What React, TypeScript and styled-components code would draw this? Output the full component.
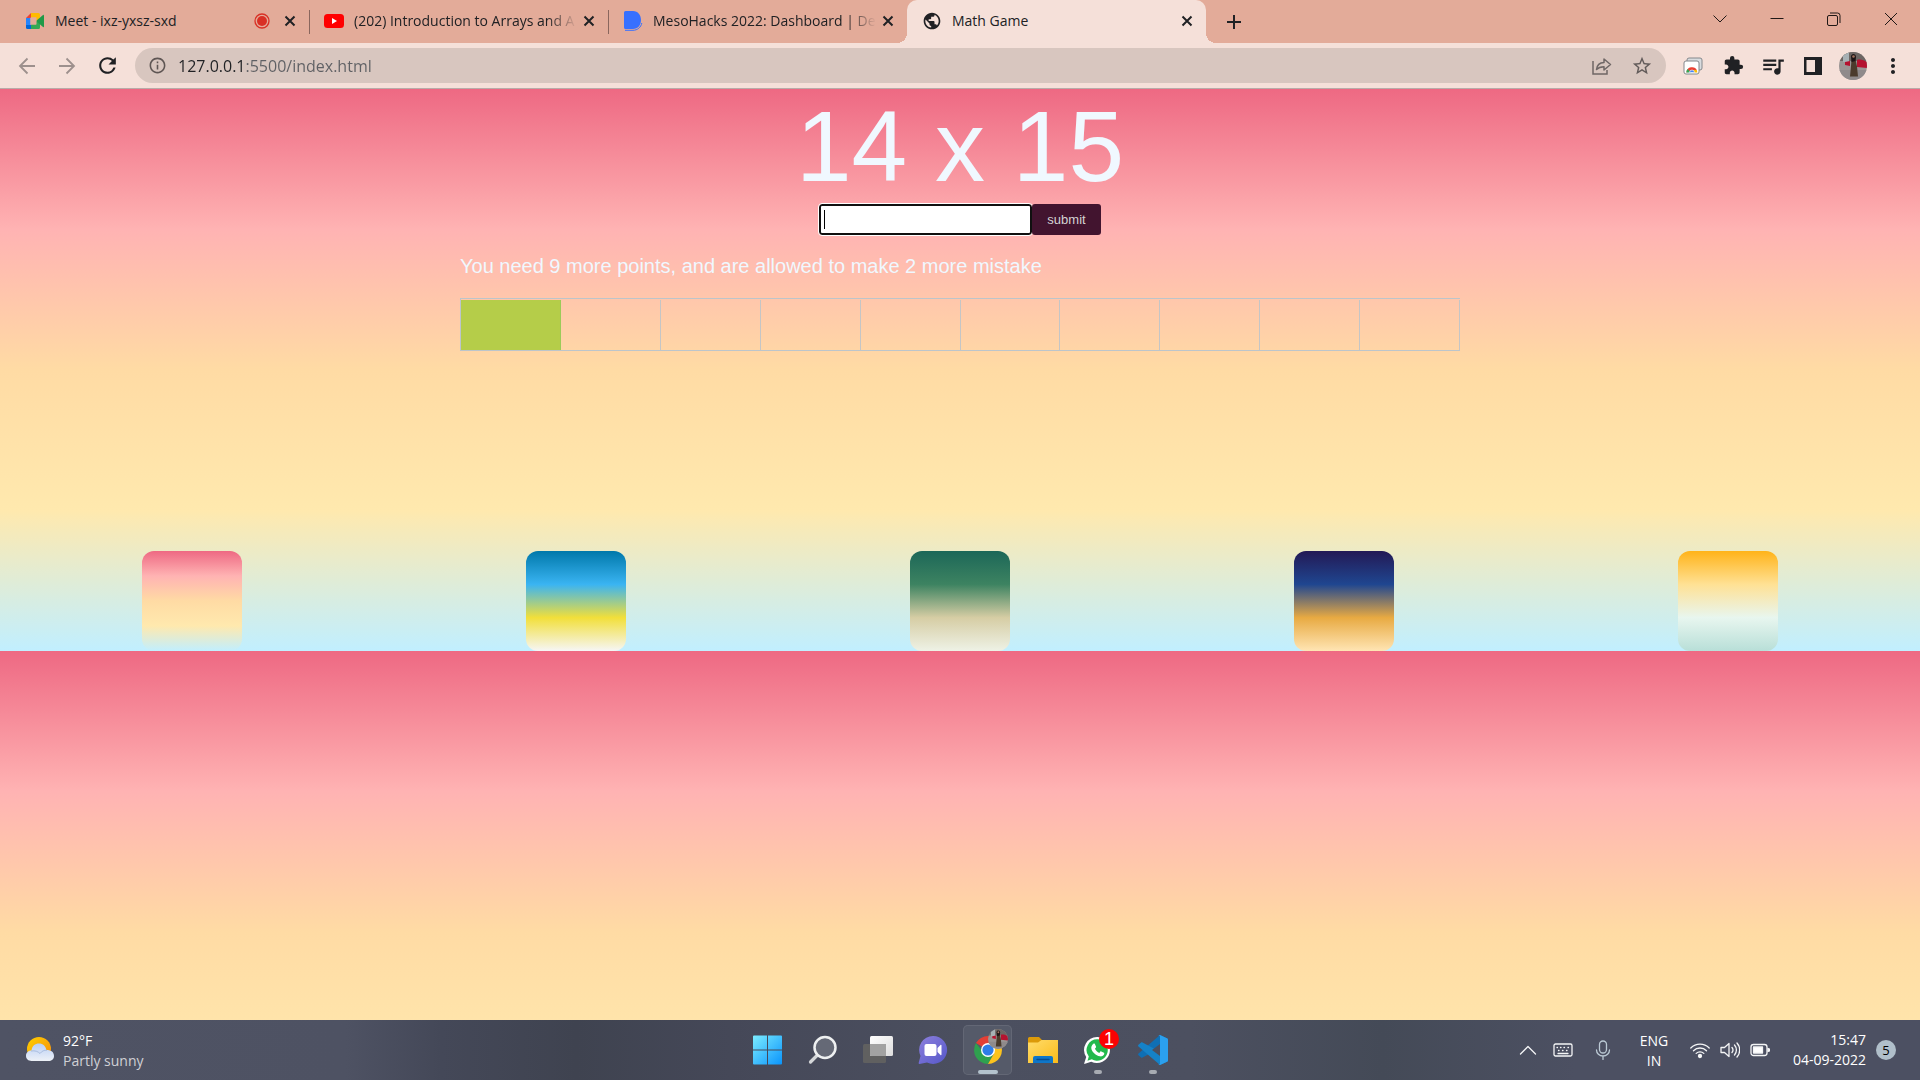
import React, { useState } from 'react';
import styled, { createGlobalStyle, css } from 'styled-components';
import { MdRefresh, MdExtension, MdQueueMusic, MdMoreVert, MdStarBorder, MdInfoOutline, MdPublic } from 'react-icons/md';

const UI_FONT = '"Segoe UI", "Open Sans", "Noto Sans", sans-serif';
const PAGE_FONT = 'Arial, "Liberation Sans", sans-serif';

const GlobalStyle = createGlobalStyle`
  *, *::before, *::after { box-sizing: border-box; }
  html, body, #root { height: 100%; }
  body { margin: 0; overflow: hidden; font-family: ${UI_FONT}; }
  button { margin: 0; padding: 0; border: 0; background: none; color: inherit; font: inherit; }
  svg { display: block; flex: none; }
`;

const Desktop = styled.div`
  display: flex;
  flex-direction: column;
  height: 100vh;
`;

/* ---------- browser chrome ---------- */

const TabStrip = styled.header`
  display: flex;
  height: 43px;
  padding-left: 10px;
  background: #e3ab99;
  color: #202124;
`;

const Tab = styled.div<{ $active?: boolean; $divider?: boolean }>`
  position: relative;
  display: flex;
  align-items: center;
  flex: 0 1 299px;
  min-width: 0;
  height: 43px;
  padding: 0 9px 2px 15px;
  gap: 10px;
  font-size: 14px;
  ${({ $divider }) => $divider && css`
    &::after {
      content: '';
      position: absolute;
      right: -1px;
      top: 10px;
      width: 1px;
      height: 24px;
      background: #8a665d;
    }
  `}
  ${({ $active }) => $active && css`
    border-radius: 10px 10px 0 0;
    background: #f5e0d9;
    &::before, &::after {
      content: '';
      position: absolute;
      bottom: 0;
      width: 10px;
      height: 10px;
    }
    &::before { left: -10px; background: radial-gradient(circle at 0 0, transparent 10px, #f5e0d9 10px); }
    &::after { right: -10px; background: radial-gradient(circle at 100% 0, transparent 10px, #f5e0d9 10px); }
  `}
`;

const TabTitle = styled.span<{ $fade?: boolean }>`
  flex: 1;
  min-width: 0;
  overflow: hidden;
  white-space: nowrap;
  ${({ $fade }) => $fade && css`
    margin-right: -8px;
    mask-image: linear-gradient(to right, #000 calc(100% - 30px), transparent);
  `}
`;

const IconButton = styled.button<{ $w?: number; $dim?: boolean }>`
  display: flex;
  align-items: center;
  justify-content: center;
  flex: none;
  width: ${({ $w = 40 }) => $w}px;
  height: 100%;
  color: ${({ $dim }) => ($dim ? '#9d908d' : '#202124')};
`;

const WindowControls = styled.div`
  display: flex;
  height: 37px;
  margin-left: auto;
`;

const Toolbar = styled.nav`
  display: flex;
  align-items: center;
  height: 46px;
  padding: 0 7px;
  border-bottom: 1px solid #b9aba8;
  background: #f5e0d9;
`;

const AddressBar = styled.form`
  display: flex;
  align-items: center;
  flex: 1;
  min-width: 0;
  height: 35px;
  margin: 0 7px 0 8px;
  padding: 0 4px 0 13px;
  gap: 11px;
  border-radius: 18px;
  background: #d8c6bf;
  color: #5f5654;
`;

/* the host is darker than the port and path that follow it */
const UrlInput = styled.input`
  flex: 1;
  min-width: 0;
  height: 24px;
  padding: 0;
  border: 0;
  outline: 0;
  font: 16px/24px ${UI_FONT};
  color: transparent;
  background: linear-gradient(90deg, #202124 67px, #5f6064 67px);
  background-clip: text;
`;

const AddressActions = styled.div`
  display: flex;
  height: 100%;
`;

/* ---------- game page ---------- */

const GamePage = styled.main`
  flex: 1;
  min-height: 0;
  overflow: hidden;
  background: linear-gradient(#ee6983, #ffb3b3, #ffdba4, #ffe9ae, #c1efff) 0 0 / 100% 562px repeat-y;
  font-family: ${PAGE_FONT};
  color: aliceblue;
`;

const Game = styled.section`
  width: min(1000px, 100%);
  margin: 0 auto;
`;

const Problem = styled.h1`
  margin: 0;
  font-size: 100px;
  font-weight: 400;
  line-height: 115px;
  text-align: center;
`;

const AnswerForm = styled.form`
  display: flex;
  justify-content: center;
`;

const AnswerInput = styled.input`
  width: 213px;
  height: 31px;
  border: 2px solid #101010;
  border-radius: 3px;
  outline: 1px solid #fff;
  padding: 0 4px;
  background: linear-gradient(#000, #000) 3px 50% / 1px 19px no-repeat #fff;
  caret-color: transparent;
`;

const SubmitButton = styled.button`
  width: 69px;
  height: 31px;
  border-radius: 3px;
  background: #42142f;
  color: #d3d3d3;
  font-family: ${PAGE_FONT};
  font-size: 13px;
`;

const Status = styled.p`
  margin: 20px 0;
  font-size: 20px;
  line-height: 23px;
`;

const Progress = styled.div`
  display: grid;
  grid-template-columns: repeat(10, 1fr);
  height: 53px;
  padding-top: 1px;
  border: solid #bcc5cb;
  border-width: 1px 0 1px 1px;
`;

const Cell = styled.div<{ $done?: boolean }>`
  border-right: 1px solid #c4c5c6;
  ${({ $done }) => $done && css`
    border-color: #9ccb58;
    background: #b5cd49;
  `}
`;

const Themes = styled.div`
  display: flex;
  justify-content: space-around;
  margin-top: 200px;
`;

const ThemeButton = styled.button<{ $colors: string }>`
  width: 100px;
  height: 100px;
  border-radius: 12px;
  background: linear-gradient(${({ $colors }) => $colors});
`;

/* ---------- taskbar ---------- */

const Taskbar = styled.footer`
  display: grid;
  grid-template-columns: 1fr auto 1fr;
  height: 60px;
  background: linear-gradient(90deg, #4f5364 0%, #4e5263 18%, #444858 23%, #3f4350 30%, #454858 38%, #4b4f5f 50%, #4c5060 62%, #444a57 72%, #4c5062 82%, #4c5062 100%);
  color: #fff;
  font-size: 14px;
  line-height: 20px;
`;

const Weather = styled.div`
  display: flex;
  align-items: center;
  gap: 9px;
  padding-left: 26px;
`;

const WeatherText = styled.div`
  padding-top: 2px;
`;

const Muted = styled.div`
  color: #cfd0d5;
`;

const Apps = styled.div`
  display: flex;
  align-items: center;
`;

const AppButton = styled.button<{ $active?: boolean }>`
  position: relative;
  display: flex;
  align-items: center;
  justify-content: center;
  width: 49px;
  height: 50px;
  margin: 0 3px;
  border-radius: 5px;
  ${({ $active }) => $active && css`
    background: #555a69;
    box-shadow: inset 0 0 0 1px #636775;
  `}
`;

const RunMark = styled.span<{ $wide?: boolean }>`
  position: absolute;
  bottom: 1px;
  width: ${({ $wide }) => ($wide ? 20 : 8)}px;
  height: 4px;
  border-radius: 2px;
  background: ${({ $wide }) => ($wide ? '#b3c2cd' : '#a7abb2')};
`;

const AppBadge = styled.span`
  position: absolute;
  top: 4px;
  right: 4px;
`;

const Count = styled.span`
  position: absolute;
  top: 4px;
  right: 3px;
  width: 20px;
  height: 20px;
  border-radius: 50%;
  background: #fb0303;
  font: 18px/20px ${PAGE_FONT};
  text-align: center;
`;

const Tray = styled.div`
  display: flex;
  align-items: center;
  justify-content: flex-end;
  padding-right: 24px;
`;

const TraySlot = styled.button<{ $w: number }>`
  display: flex;
  align-items: center;
  justify-content: center;
  width: ${({ $w }) => $w}px;
  height: 40px;
`;

const Language = styled.div`
  width: 62px;
  padding-top: 2px;
  text-align: center;
`;

const Clock = styled.time`
  width: 91px;
  text-align: right;
`;

const Notices = styled.span`
  width: 20px;
  height: 20px;
  margin-left: 10px;
  border-radius: 50%;
  background: #b0bfca;
  color: #000;
  font-size: 13px;
  text-align: center;
`;

/* ---------- drawings ---------- */

const CloseX = () => (
  <svg width="20" height="20" viewBox="0 0 20 20" stroke="currentColor" strokeWidth="2" fill="none">
    <path d="M5.5 5.5l9 9M14.5 5.5l-9 9" />
  </svg>
);

const MeetLogo = () => (
  <svg width="20" height="20" viewBox="0 0 20 20">
    <path d="M1 7l5-5v5z" fill="#ea4335" />
    <path d="M6 2h7.500a1.500 1.500 0 0 1 1.500 1.500V8l-4 2V6.500H6z" fill="#ffba00" />
    <path d="M1 7h4.500v7H1z" fill="#2684fc" />
    <path d="M1 14h5v4H2.500A1.500 1.500 0 0 1 1 16.500z" fill="#0066da" />
    <path d="M6 13.500h5v-3.500l4 2v4.500a1.500 1.500 0 0 1-1.500 1.500H6z" fill="#34a853" />
    <path d="M11 10l7-6c.5-.4 1-.1 1 .5v11c0 .6-.5.900-1 .5z" fill="#1f9a48" />
    <path d="M5.500 6.500h6v7h-6z" fill="#e3ab99" />
  </svg>
);

const RecordDot = () => (
  <svg width="16" height="16" viewBox="0 0 16 16">
    <circle cx="8" cy="8" r="7" fill="none" stroke="#d93025" strokeWidth="1.300" />
    <circle cx="8" cy="8" r="5" fill="#d93025" />
  </svg>
);

const YouTubeLogo = () => (
  <svg width="20" height="20" viewBox="0 0 20 20">
    <rect y="3" width="20" height="14" rx="3.500" fill="#f00" />
    <path d="M8 7l5 3-5 3z" fill="#fff" />
  </svg>
);

const DevfolioLogo = () => (
  <svg width="20" height="20" viewBox="0 0 20 20">
    <path d="M2.500 0H10c5 0 8 4 8 9s-3 9-8 9H2.500A1.500 1.500 0 0 1 1 16.500v-15A1.500 1.500 0 0 1 2.500 0z" fill="#3770ff" />
    <path d="M2 19.300h8c4.500 0 8-3 8.800-7.300" fill="none" stroke="#3770ff" strokeWidth="1" />
  </svg>
);

const Arrow = ({ flip }: { flip?: boolean }) => (
  <svg width="20" height="20" viewBox="0 0 20 20" fill="none" stroke="currentColor" strokeWidth="1.800">
    {flip ? <path d="M2 10h15M9.500 2.500L17 10l-7.500 7.500" /> : <path d="M18 10H3M10.500 2.500L3 10l7.500 7.500" />}
  </svg>
);

const ShareIcon = () => (
  <svg width="20" height="20" viewBox="0 0 20 20" fill="none" stroke="#6f6766" strokeWidth="1.500">
    <path d="M1 5v13h14v-4" />
    <path d="M4.500 13.500C5 9 8 6.700 12 6.500V3l6.500 5.500L12 14v-3.300c-3.200 0-5.500.6-7.500 2.800z" strokeLinejoin="round" />
  </svg>
);

const ScreensIcon = () => (
  <svg width="20" height="20" viewBox="0 0 20 20">
    <rect x="4" y="2" width="15" height="12" rx="2" fill="#d9dcdf" stroke="#84888c" />
    <rect x="1" y="5" width="15" height="13" rx="2" fill="#fff" stroke="#84888c" />
    <path d="M3.500 16.500a5.500 5.500 0 0 1 10.500-2L9 15z" fill="#ea4335" />
    <path d="M3.300 16.500c0-1.300.4-2.500 1.200-3.400L8 16.500z" fill="#34a853" />
    <path d="M10 16.500l1-2.500h2.700c.4.700.6 1.500.6 2.500z" fill="#fbbc05" />
    <path d="M6.500 16.500a2.500 2.500 0 0 1 5 0z" fill="#4285f4" stroke="#fff" strokeWidth=".6" />
  </svg>
);

const SidePanelIcon = () => (
  <svg width="20" height="20" viewBox="0 0 20 20">
    <path d="M1 1h18v18H1zM3.500 4v12H12V4z" fill="#202124" fillRule="evenodd" />
  </svg>
);

const Portrait = ({ size }: { size: number }) => (
  <svg width={size} height={size} viewBox="0 0 28 28">
    <defs>
      <clipPath id={`face${size}`}><circle cx="14" cy="14" r="14" /></clipPath>
    </defs>
    <g clipPath={`url(#face${size})`}>
      <rect width="28" height="28" fill="#9b9594" />
      <rect width="28" height="9" fill="#6d6663" />
      <path d="M4 0h6v10H4z" fill="#a7b1b5" />
      <path d="M18 8c3-1 7 0 10 2v6l-10-1zM6 10l5-1v5l-5-1z" fill="#b5122f" />
      <path d="M0 18h28v10H0z" fill="#8f8a8b" />
      <path d="M12.500 8l4-.5 1.500 7 1 10h-8l1-10.500z" fill="#4b3b2c" />
      <path d="M12 4.500C12 1 17 1 17 5l-.5 4-4 1z" fill="#1d1516" />
      <circle cx="14.500" cy="4.500" r="1.300" fill="#a4735f" />
    </g>
  </svg>
);

const WindowIcon = ({ d }: { d: string }) => (
  <svg width="14" height="14" viewBox="0 0 14 14" fill="none" stroke="#201816" strokeWidth="1">
    <path d={d} />
  </svg>
);

const WeatherIcon = () => (
  <svg width="28" height="26" viewBox="0 0 28 26">
    <defs>
      <linearGradient id="sun" x1="0" y1="0" x2="1" y2="1"><stop stopColor="#ffd000" /><stop offset="1" stopColor="#f58a0b" /></linearGradient>
      <linearGradient id="cloud" x1="0" y1="0" x2="0" y2="1"><stop stopColor="#b9cff5" /><stop offset="1" stopColor="#edf1f7" /></linearGradient>
    </defs>
    <circle cx="13" cy="12" r="12" fill="url(#sun)" />
    <path d="M5.500 13.500C6 9 9 6.500 13 6.500c4 0 6.700 2.500 7.300 6.500 4 0 7.700 1.500 7.700 6 0 3.300-2.500 5-5.500 5h-17C2.300 24 0 22 0 18.800c0-3.300 2.500-5.300 5.500-5.300z" fill="url(#cloud)" />
    <path d="M5 14c4-.7 7 .5 9 2.500 2-2.500 4-3.500 7-3.300" fill="none" stroke="#a9bddf" strokeWidth="1" />
  </svg>
);

const StartIcon = () => (
  <svg width="30" height="30" viewBox="0 0 30 30">
    <defs>
      <linearGradient id="win" x1="0" y1="0" x2="1" y2="1"><stop stopColor="#7cecff" /><stop offset="1" stopColor="#0a94fb" /></linearGradient>
    </defs>
    <path d="M1 .5H14v14H0v-13a1 1 0 0 1 1-1zM15 .5h13a1 1 0 0 1 1 1v13H15zM0 15.500h14v14H1a1 1 0 0 1-1-1zM15 15.500h14v13a1 1 0 0 1-1 1H15z" fill="url(#win)" />
  </svg>
);

const SearchIcon = () => (
  <svg width="30" height="30" viewBox="0 0 30 30" fill="none">
    <path d="M2.500 27l8-8" stroke="#d5d7d9" strokeWidth="3.200" strokeLinecap="round" />
    <circle cx="17" cy="12.500" r="10.500" fill="#656976" stroke="#eef0f1" strokeWidth="2.500" />
  </svg>
);

const TaskViewIcon = () => (
  <svg width="30" height="30" viewBox="0 0 30 30">
    <defs><linearGradient id="pane" x1="0" y1="0" x2="1" y2="1"><stop stopColor="#fff" /><stop offset="1" stopColor="#ddd" /></linearGradient></defs>
    <rect x="0" y="9" width="23" height="19" rx="1.500" fill="#606060" />
    <rect x="7" y="1" width="23" height="20" rx="1.500" fill="url(#pane)" />
    <path d="M7 9h16v12H8.500A1.500 1.500 0 0 1 7 19.500z" fill="#a2a2a2" />
  </svg>
);

const ChatIcon = () => (
  <svg width="30" height="30" viewBox="0 0 30 30">
    <defs><linearGradient id="chat" x1="0" y1="0" x2="1" y2="1"><stop stopColor="#8d80dd" /><stop offset="1" stopColor="#5557c9" /></linearGradient></defs>
    <path d="M15 1a14 14 0 1 1-6 26.600L1.500 29c-.7 0-1-.5-.8-1.200L2.500 21A14 14 0 0 1 15 1z" fill="url(#chat)" />
    <rect x="6.500" y="9" width="12" height="12" rx="2" fill="#fff" />
    <path d="M19.500 13l3-3c.5-.4 1-.1 1 .5v9c0 .6-.5.900-1 .5l-3-3z" fill="#fff" />
  </svg>
);

const ChromeIcon = () => (
  <svg width="28" height="28" viewBox="0 0 28 28">
    <path d="M14 14L1.900 7A14 14 0 0 1 26.100 7z" fill="#e43f35" />
    <path d="M14 14H7.500L1.900 7A14 14 0 0 0 14 28l5-9z" fill="#2fa14f" />
    <path d="M14 14V7h12.100A14 14 0 0 1 14 28l6-10.500z" fill="#fcc31e" />
    <circle cx="14" cy="14" r="7" fill="#fff" />
    <circle cx="14" cy="14" r="5.600" fill="#2f7de9" />
  </svg>
);

const FolderIcon = () => (
  <svg width="30" height="28" viewBox="0 0 30 28">
    <defs><linearGradient id="folder" x1="0" y1="0" x2="1" y2="1"><stop stopColor="#ffdc6b" /><stop offset="1" stopColor="#fbbb19" /></linearGradient></defs>
    <path d="M1.500 1H11l3 3v6H0V2.500A1.500 1.500 0 0 1 1.500 1z" fill="#dc9a09" />
    <path d="M0 6.500h10L13.500 4H30v23H0z" fill="url(#folder)" />
    <path d="M5 27v-5a2 2 0 0 1 2-2h16a2 2 0 0 1 2 2v5z" fill="#0f76c8" />
    <path d="M9 23.500h12" stroke="#064c91" strokeWidth="1.300" strokeLinecap="round" />
  </svg>
);

const WhatsAppIcon = () => (
  <svg width="27" height="28" viewBox="0 0 27 28">
    <path d="M13.500 1A13 13 0 1 1 7.300 25.700L0 28l2.200-7A13 13 0 0 1 13.500 1z" fill="#fff" />
    <path d="M13.500 3.300A10.700 10.700 0 1 1 7.800 23.300L3.500 24.700l1.300-4.200A10.700 10.700 0 0 1 13.500 3.300z" fill="#22b94c" />
    <path d="M9.400 7.800c.4-.3 1.200-.3 1.500.3l1.200 2.600c.1.500-.1.900-1.200 2 1 2 2.400 3.300 4.500 4.200 1-1.300 1.400-1.700 1.800-1.500l2.800 1.400c.4.300.3 1.500-.3 2.300-.8 1-2.300 1.500-3.800 1.200-4.200-.9-7.500-4.200-8.500-7.400-.5-2 .6-4.100 2-5.100z" fill="#fff" />
  </svg>
);

const CodeIcon = () => (
  <svg width="30" height="30" viewBox="0 0 30 30">
    <path d="M22 0l7 3.200c.6.300 1 .8 1 1.500V9L4.500 22.500c-.5.400-1 .4-1.400 0L.5 20.200c-.6-.5-.6-1.300 0-1.800z" fill="#0f6fb4" />
    <path d="M22 30l7-3.200c.6-.3 1-.8 1-1.500V21L4.500 7.500c-.5-.4-1-.4-1.400 0L.5 9.800c-.6.500-.6 1.300 0 1.800z" fill="#1582c8" />
    <path d="M22 30c-.7.100-1.500-.2-2-.7.700.6 2 .2 2-.9V1.600c0-1-1.300-1.500-2-.8.500-.6 1.300-.9 2-.7l7 3.200c.6.300 1 .8 1 1.500v20.500c0 .7-.4 1.200-1 1.500z" fill="#2ba0ee" />
    <path d="M22 9l-8 6 8 6z" fill="#4b4f5f" />
  </svg>
);

const TrayIcon = ({ children }: { children: React.ReactNode }) => (
  <svg width="20" height="20" viewBox="0 0 20 20" fill="none" stroke="#f4f5f6" strokeWidth="1.300" strokeLinecap="round" strokeLinejoin="round">{children}</svg>
);

const themes = [
  { name: 'Sunset', colors: '#ee6983, #ffb3b3, #ffdba4, #ffe9ae, #c1efff' },
  { name: 'Beach', colors: '#0078aa, #3ab4f2, #f2df3a, #f6f6f6' },
  { name: 'Forest', colors: '#1c6758, #3d8361, #d6cda4, #eef2e6' },
  { name: 'Night', colors: '#231955, #1f4690, #e8aa42, #ffe5b4' },
  { name: 'Morning', colors: '#ffb319, #ffe194, #e8f6ef, #b8dfd8' },
];

const steps = Array.from({ length: 10 }, (_, i) => i < 1);

export default function App() {
  const [url, setUrl] = useState('127.0.0.1:5500/index.html');

  return (
    <Desktop>
      <GlobalStyle />
      <TabStrip>
        <Tab $divider>
          <MeetLogo />
          <TabTitle>Meet - ixz-yxsz-sxd</TabTitle>
          <RecordDot />
          <IconButton $w={20} aria-label="Close tab"><CloseX /></IconButton>
        </Tab>
        <Tab $divider>
          <YouTubeLogo />
          <TabTitle $fade>(202) Introduction to Arrays and A</TabTitle>
          <IconButton $w={20} aria-label="Close tab"><CloseX /></IconButton>
        </Tab>
        <Tab>
          <DevfolioLogo />
          <TabTitle $fade>MesoHacks 2022: Dashboard | De</TabTitle>
          <IconButton $w={20} aria-label="Close tab"><CloseX /></IconButton>
        </Tab>
        <Tab $active>
          <MdPublic size={20} />
          <TabTitle>Math Game</TabTitle>
          <IconButton $w={20} aria-label="Close tab"><CloseX /></IconButton>
        </Tab>
        <IconButton $w={56} aria-label="New tab">
          <svg width="16" height="16" viewBox="0 0 16 16" stroke="currentColor" strokeWidth="2"><path d="M8 1v14M1 8h14" /></svg>
        </IconButton>
        <WindowControls>
          <IconButton $w={57} aria-label="Search tabs"><WindowIcon d="M.5 3.500L7 10l6.500-6.500" /></IconButton>
          <IconButton $w={57} aria-label="Minimize"><WindowIcon d="M.5 6.500h13" /></IconButton>
          <IconButton $w={57} aria-label="Restore"><WindowIcon d="M2 3.500h7a1.500 1.500 0 0 1 1.500 1.500v7A1.500 1.500 0 0 1 9 13.500H2A1.500 1.500 0 0 1 .5 12V5A1.500 1.500 0 0 1 2 3.500zM3 1h7.500a2.500 2.500 0 0 1 2.500 2.500V11" /></IconButton>
          <IconButton $w={58} aria-label="Close window"><WindowIcon d="M1 1l12 12M13 1L1 13" /></IconButton>
        </WindowControls>
      </TabStrip>

      <Toolbar>
        <IconButton $dim aria-label="Back"><Arrow /></IconButton>
        <IconButton $dim aria-label="Forward"><Arrow flip /></IconButton>
        <IconButton aria-label="Reload"><MdRefresh size={25} /></IconButton>
        <AddressBar onSubmit={(e) => e.preventDefault()}>
          <MdInfoOutline size={19} />
          <UrlInput aria-label="Address" value={url} onChange={(e) => setUrl(e.target.value)} />
          <AddressActions>
            <IconButton type="button" aria-label="Share"><ShareIcon /></IconButton>
            <IconButton type="button" aria-label="Bookmark"><MdStarBorder size={22} color="#625b5a" /></IconButton>
          </AddressActions>
        </AddressBar>
        <IconButton aria-label="Screens"><ScreensIcon /></IconButton>
        <IconButton aria-label="Extensions"><MdExtension size={21} /></IconButton>
        <IconButton aria-label="Media"><MdQueueMusic size={26} /></IconButton>
        <IconButton aria-label="Side panel"><SidePanelIcon /></IconButton>
        <IconButton aria-label="Profile"><Portrait size={28} /></IconButton>
        <IconButton aria-label="Menu"><MdMoreVert size={24} /></IconButton>
      </Toolbar>

      <GamePage>
        <Game>
          <Problem>14 x 15</Problem>
          <AnswerForm onSubmit={(e) => e.preventDefault()}>
            <AnswerInput aria-label="Answer" autoComplete="off" />
            <SubmitButton>submit</SubmitButton>
          </AnswerForm>
          <Status>You need 9 more points, and are allowed to make 2 more mistake</Status>
          <Progress>
            {steps.map((done, i) => <Cell key={i} $done={done} />)}
          </Progress>
        </Game>
        <Themes>
          {themes.map((t) => <ThemeButton key={t.name} $colors={t.colors} aria-label={t.name} />)}
        </Themes>
      </GamePage>

      <Taskbar>
        <Weather>
          <WeatherIcon />
          <WeatherText>
            <div>92°F</div>
            <Muted>Partly sunny</Muted>
          </WeatherText>
        </Weather>
        <Apps>
          <AppButton aria-label="Start"><StartIcon /></AppButton>
          <AppButton aria-label="Search"><SearchIcon /></AppButton>
          <AppButton aria-label="Task view"><TaskViewIcon /></AppButton>
          <AppButton aria-label="Chat"><ChatIcon /></AppButton>
          <AppButton $active aria-label="Chrome"><ChromeIcon /><AppBadge><Portrait size={20} /></AppBadge><RunMark $wide /></AppButton>
          <AppButton aria-label="Explorer"><FolderIcon /></AppButton>
          <AppButton aria-label="WhatsApp"><WhatsAppIcon /><Count>1</Count><RunMark /></AppButton>
          <AppButton aria-label="Code"><CodeIcon /><RunMark /></AppButton>
        </Apps>
        <Tray>
          <TraySlot $w={30} aria-label="Hidden icons"><TrayIcon><path d="M2.500 14L10 6.500l7.500 7.500" /></TrayIcon></TraySlot>
          <TraySlot $w={40} aria-label="Keyboard">
            <TrayIcon>
              <rect x="1" y="4" width="18" height="12" rx="1.500" />
              <path d="M4 7.500h.5M7.500 7.500H8M11 7.500h.5M15 7.500h.5M5.500 10.500H6M9.500 10.500h.5M13.500 10.500h.5M5 13.500h10" />
            </TrayIcon>
          </TraySlot>
          <TraySlot $w={40} aria-label="Microphone">
            <TrayIcon><g stroke="#bccad5"><rect x="6.500" y="1" width="7" height="12" rx="3.500" /><path d="M3.500 10a6.500 6 0 0 0 13 0M10 16v3.500" /></g></TrayIcon>
          </TraySlot>
          <Language>
            <div>ENG</div>
            <div>IN</div>
          </Language>
          <TraySlot $w={30} aria-label="Network">
            <TrayIcon><path d="M.8 8a13 13 0 0 1 18.400 0M3.500 10.700a9.200 9.200 0 0 1 13 0M6.200 13.400a5.400 5.400 0 0 1 7.600 0" /><circle cx="10" cy="16" r="1.500" fill="#fff" /></TrayIcon>
          </TraySlot>
          <TraySlot $w={30} aria-label="Volume">
            <TrayIcon><path d="M1 7.500h3.500L9 3.500v13l-4.500-4H1zM12 7.500a4 4 0 0 1 0 5M14.500 5a7.500 7.500 0 0 1 0 10M17 3a10.500 10.500 0 0 1 0 14" /></TrayIcon>
          </TraySlot>
          <TraySlot $w={30} aria-label="Battery">
            <TrayIcon><rect x="1" y="4.500" width="16" height="11" rx="2.500" /><rect x="3.500" y="7" width="9" height="6" fill="#fff" /><path d="M18 8.500l1.500.5v2l-1.500.5z" fill="#fff" /></TrayIcon>
          </TraySlot>
          <Clock>
            <div>15:47</div>
            <div>04-09-2022</div>
          </Clock>
          <Notices>5</Notices>
        </Tray>
      </Taskbar>
    </Desktop>
  );
}
